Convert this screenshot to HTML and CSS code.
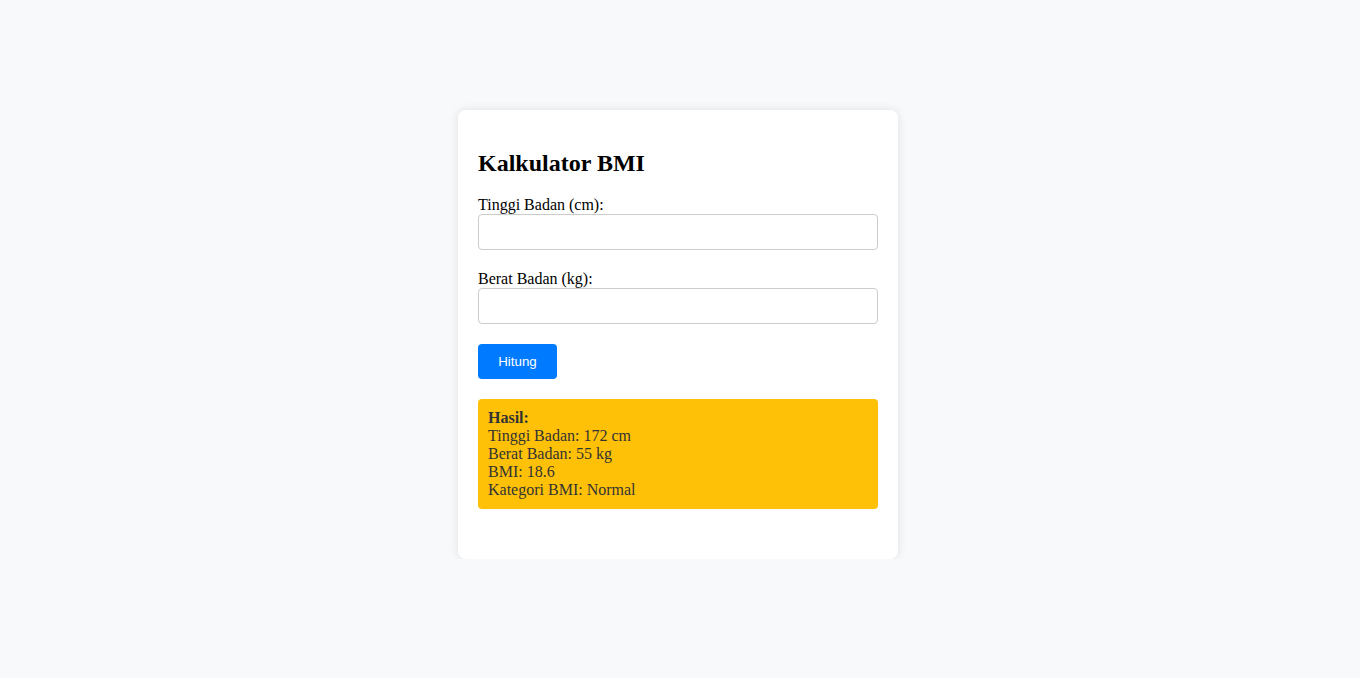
FILE: index.html
```html
<!DOCTYPE html>
<html>
<head>
<meta charset="utf-8">
<link rel="stylesheet" href="styles.css">
</head>
<body>
<div class="page">
  <div class="card">
    <h2 class="title">Kalkulator BMI</h2>
    <label class="label" for="tinggi">Tinggi Badan (cm):</label>
    <input class="field" id="tinggi" type="number">
    <label class="label" for="berat">Berat Badan (kg):</label>
    <input class="field" id="berat" type="number">
    <button class="btn">Hitung</button>
    <div class="result">
      <strong>Hasil:</strong><br>
      Tinggi Badan: 172 cm<br>
      Berat Badan: 55 kg<br>
      BMI: 18.6<br>
      Kategori BMI: Normal
    </div>
  </div>
</div>
</body>
</html>
```
FILE: styles.css
```css
html, body {
  margin: 0;
  padding: 0;
  background: #f8f9fa;
  font-family: "Liberation Serif", "Times New Roman", serif;
  font-size: 16px;
}
.page {
  display: flex;
  justify-content: center;
  padding-top: 110px;
  padding-right: 4px;
}
.card {
  width: 440px;
  box-sizing: border-box;
  background: #fff;
  border-radius: 8px;
  box-shadow: 0 0 10px rgba(0, 0, 0, 0.1);
  padding: 20px 20px 50px;
}
.title {
  font-size: 24px;
  font-weight: bold;
  margin: 20px 0 19px;
  line-height: 27px;
  color: #000;
}
.label {
  display: block;
  line-height: 18px;
  color: #000;
}
.field {
  display: block;
  width: 100%;
  height: 36px;
  box-sizing: border-box;
  border: 1px solid #ccc;
  border-radius: 4px;
  padding: 8px;
  margin: 0 0 20px;
  font-size: 14px;
  background: #fff;
}
.btn {
  display: block;
  width: 79px;
  background: #007bff;
  color: #fff;
  border: none;
  border-radius: 4px;
  padding: 0;
  height: 35px;
  font-family: "Liberation Sans", Arial, sans-serif;
  font-size: 13.33px;
  margin: 0 0 20px;
  cursor: pointer;
}
.result {
  background: #ffc107;
  color: #333;
  border-radius: 4px;
  padding: 10px;
  line-height: 18px;
}
```
